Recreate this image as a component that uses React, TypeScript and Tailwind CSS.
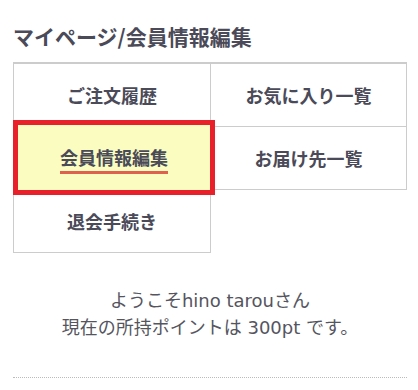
export default function App() {
  const jp = { fontFamily: '"Noto Sans CJK JP", "Noto Sans", sans-serif' };
  const body = { fontFamily: '"DejaVu Sans", "Noto Sans CJK JP", sans-serif' };

  return (
    <div className="w-[418px] h-[390px] bg-white overflow-hidden" style={jp}>
      <div className="pl-[13px] pr-[11px]">
        <h2 className="pt-[22px] h-[62px] text-[21px] leading-[28px] font-bold text-[#4a4a58]">
          マイページ/会員情報編集
        </h2>

        <div className="grid grid-cols-[198px_196px] border-t-2 border-[#cccccc]">
          <div className="h-[63px] border-l border-r border-b border-[#cccccc] flex items-center justify-center">
            <span className="text-[18px] font-bold text-[#4a4a58]">ご注文履歴</span>
          </div>
          <div className="h-[63px] border-r border-b border-[#cccccc] flex items-center justify-center">
            <span className="text-[18px] font-bold text-[#4a4a58]">お気に入り一覧</span>
          </div>

          <div className="relative h-[63px] border-l border-r border-b border-[#cccccc]">
            <div className="absolute -left-[1px] -top-[7px] -right-[5px] -bottom-[6px] z-10 border-[5px] border-[#e8202a] bg-[#fafcc0] flex items-center justify-center">
              <span className="mt-[2px] pb-[1px] border-b-[3px] border-[#e06050] text-[18px] leading-[26px] font-bold text-[#4a4a58]">
                会員情報編集
              </span>
            </div>
          </div>
          <div className="h-[63px] border-r border-b border-[#cccccc] flex items-center justify-center">
            <span className="text-[18px] font-bold text-[#4a4a58]">お届け先一覧</span>
          </div>

          <div className="h-[63px] border-l border-r border-b border-[#cccccc] flex items-center justify-center">
            <span className="text-[18px] font-bold text-[#4a4a58]">退会手続き</span>
          </div>
          <div />
        </div>

        <div className="mt-[34px] text-center text-[18px] leading-[27px] text-[#555560]" style={body}>
          <p>ようこそhino tarouさん</p>
          <p>現在の所持ポイントは 300pt です。</p>
        </div>

        <div className="mt-[36px] border-t border-dotted border-[#bbbbbb]" />
      </div>
    </div>
  );
}
